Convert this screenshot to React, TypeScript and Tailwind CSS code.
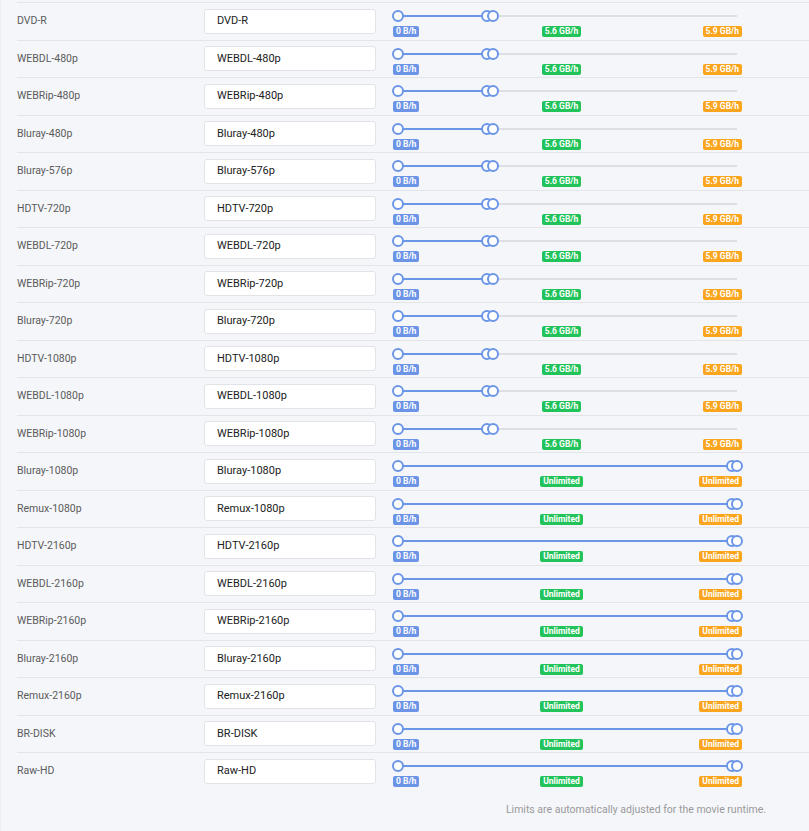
import React from 'react';

type Profile = {
  name: string;
  limited: boolean;
};

const names = [
  'DVD-R',
  'WEBDL-480p',
  'WEBRip-480p',
  'Bluray-480p',
  'Bluray-576p',
  'HDTV-720p',
  'WEBDL-720p',
  'WEBRip-720p',
  'Bluray-720p',
  'HDTV-1080p',
  'WEBDL-1080p',
  'WEBRip-1080p',
  'Bluray-1080p',
  'Remux-1080p',
  'HDTV-2160p',
  'WEBDL-2160p',
  'WEBRip-2160p',
  'Bluray-2160p',
  'Remux-2160p',
  'BR-DISK',
  'Raw-HD',
];

const profiles: Profile[] = names.map((name, i) => ({ name, limited: i < 12 }));

// thumb sits over the track, centred on its value
const Thumb: React.FC<{ pct: number }> = ({ pct }) => (
  <span
    className="absolute top-1/2 h-3 w-3 -translate-x-1/2 -translate-y-1/2 rounded-full border-2 border-[#6b96e8] bg-white"
    style={{ left: `${pct}%` }}
  />
);

const Badge: React.FC<{ color: string; children: React.ReactNode }> = ({ color, children }) => (
  <span
    className={`block h-[11px] whitespace-nowrap rounded-[2px] px-[3px] text-[8.5px] font-bold leading-[11px] text-white ${color}`}
  >
    {children}
  </span>
);

const SizeSlider: React.FC<{ limited: boolean }> = ({ limited }) => {
  // values as percent of the track
  const preferred = limited ? 26.4 : 98.6;
  const max = limited ? 27.9 : 100;

  return (
    <div className="flex w-[351px] shrink-0 flex-col gap-[4px] self-start pt-[7px] leading-none">
      <div className="px-[6px]">
        <div className="relative h-3">
          <div className="absolute inset-x-0 top-[5px] h-[2px] bg-[#dedfe2]" />
          <div
            className="absolute left-0 top-[5px] h-[2px] bg-[#6b96e8]"
            style={{ width: `${max}%` }}
          />
          <Thumb pct={0} />
          <Thumb pct={preferred} />
          <Thumb pct={max} />
        </div>
      </div>
      <div className="flex h-[11px] items-center px-[1px]">
        <div className="flex flex-1">
          <Badge color="bg-[#6c94e6]">0 B/h</Badge>
        </div>
        <div className="flex -translate-x-[6px]">
          <Badge color="bg-[#22c35a]">{limited ? '5.6 GB/h' : 'Unlimited'}</Badge>
        </div>
        <div className="flex flex-1 justify-end">
          <Badge color="bg-[#fba51e]">{limited ? '5.9 GB/h' : 'Unlimited'}</Badge>
        </div>
      </div>
    </div>
  );
};

export default function App() {
  return (
    <div
      className="min-h-screen border-l border-[#eceef2] bg-[#f5f6fa] pt-[2px]"
      style={{ fontFamily: 'Roboto, "Liberation Sans", sans-serif' }}
    >
      {profiles.map((p) => (
        <div
          key={p.name}
          className="ml-4 flex h-[37.5px] items-center gap-4 border-t border-[#e3e5e9]"
        >
          <div className="w-[171px] shrink-0 text-[10.5px] text-[#5b5b5b]">{p.name}</div>
          <div className="flex h-[25px] w-[172px] shrink-0 items-center rounded-[3px] border border-[#e1e3e8] bg-white pl-[12px] text-[11px] text-[#222]">
            {p.name}
          </div>
          <SizeSlider limited={p.limited} />
        </div>
      ))}

      <p className="mt-[12px] pr-[43px] text-right text-[10.5px] text-[#9a9a9a]">
        Limits are automatically adjusted for the movie runtime.
      </p>
    </div>
  );
}
